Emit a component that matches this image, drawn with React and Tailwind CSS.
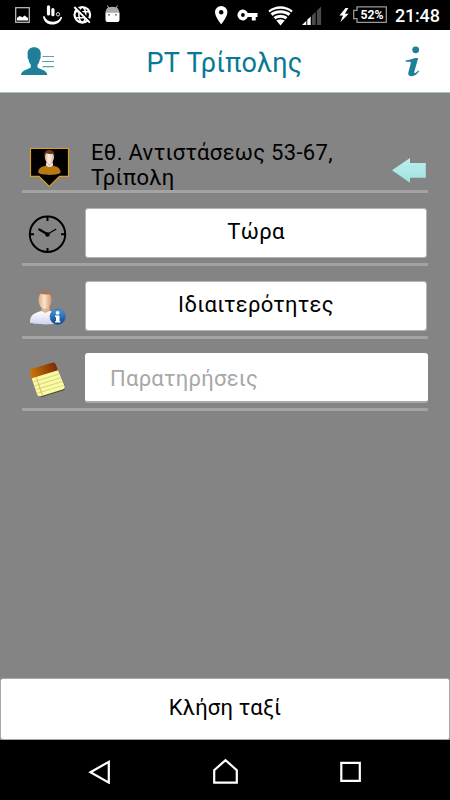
import { useState } from "react";
import clsx from "clsx";

const StatusBar = () => (
  <div className="h-[30px] bg-black flex items-center text-white">
    <svg width="130" height="30" viewBox="0 0 130 30">
      {/* picture */}
      <rect x="15.7" y="7.7" width="13.6" height="14.6" fill="none" stroke="#c4c4c4" strokeWidth="1.2" />
      <path d="M17 20.5v-2.5l2.5-2 3 1.2 2-1.6 3.5 2.4v2.5z" fill="#fff" />
      {/* touch */}
      <path d="M48.500 6.800v7.200M52.900 9.500v5.200" stroke="#fff" strokeWidth="3.200" strokeLinecap="round" />
      <circle cx="58" cy="14.300" r="1.700" fill="none" stroke="#ddd" strokeWidth="1" />
      <path d="M43 16.500l1.400-.4c1.400 3.800 4.200 5.600 8 5.600 4.200 0 7-1.800 8.400-5l1.400.5c-1.600 4.900-5 7.300-9.800 7.300-5 0-8.600-2.500-9.400-8z" fill="#fff" />
      {/* globe off */}
      <circle cx="82.300" cy="14.800" r="7.800" fill="none" stroke="#fff" strokeWidth="2.200" />
      <ellipse cx="82.300" cy="14.800" rx="3.400" ry="7.600" fill="none" stroke="#fff" strokeWidth="1.600" />
      <path d="M75 11.800h14.600M75 17.800h14.600" stroke="#fff" strokeWidth="1.600" />
      <path d="M75.500 6.200L91 21.500" stroke="#000" strokeWidth="2" />
      <path d="M74.300 7L89.800 22.700" stroke="#fff" strokeWidth="1.800" />
      {/* android */}
      <path d="M105.500 12.700c0-2.500 1.200-4.200 2.600-5.100l-1.300-1.800.7-.5 1.500 2c1.800-.7 5-.7 6.800 0l1.500-2 .7.500-1.300 1.800c1.400.9 2.600 2.600 2.600 5.100z" fill="#aaa" />
      <path d="M105.500 12.400h14v7a2.700 2.700 0 0 1-2.700 2.700h-8.600a2.700 2.700 0 0 1-2.700-2.700z" fill="#fff" />
      <circle cx="109" cy="14.800" r=".9" fill="#555" />
      <circle cx="116" cy="14.800" r=".9" fill="#555" />
    </svg>

    <svg width="176" height="30" viewBox="212 0 176 30" className="ml-[82px]">
      {/* location */}
      <path d="M221.200 6a6.200 6.200 0 0 0-6.200 6.200c0 4.600 6.200 12 6.200 12s6.200-7.400 6.200-12a6.200 6.200 0 0 0-6.200-6.200z" fill="#fff" />
      <circle cx="221.200" cy="12.200" r="2.200" fill="#000" />
      {/* key */}
      <path d="M247.800 13h9.700v4h-1.800v3.400h-3.900V17h-4a5.400 5.400 0 1 1 0-4z" fill="#fff" />
      <circle cx="242.900" cy="15" r="1.900" fill="#000" />
      {/* wifi */}
      <path d="M280.500 25.500L268.300 10.800c7-6 17.400-6 24.400 0z" fill="#fff" />
      <path d="M269.500 13.400c6-5.200 16-5.200 22 0M272.300 16.900c4.500-3.900 11.900-3.900 16.400 0M275.300 20.300c2.800-2.400 7.600-2.400 10.400 0" fill="none" stroke="#000" strokeWidth="1.300" />
      {/* signal */}
      <path d="M302 25l4.300-4.200V25zM307.300 19.800l3.400-3.300V25h-3.400z" fill="#fff" />
      <path d="M311.900 15.400l3.800-3.700V25h-3.800zM316.900 10.600l4.200-4.100V25h-4.200z" fill="#4a4a4a" />
      {/* charging */}
      <path d="M345.500 8l-6 7.600h3.500l-2.700 6.600 8.400-8.400h-3.800l3.500-5.800z" fill="#fff" />
      <path d="M357 6.800h29.300v15.500H357v-3.600h-3.300v-8.300h3.300z" fill="none" stroke="#999" strokeWidth="1.300" />
      <text x="372" y="19" textAnchor="middle" fontSize="13" fontWeight="700" textLength="23" lengthAdjust="spacingAndGlyphs" fill="#fff">52%</text>
    </svg>
    <span className="ml-[7px] mt-px text-[18px] font-medium leading-none tracking-[-0.2px]">21:48</span>
  </div>
);

const Header = () => (
  <div className="h-[63px] bg-white border-b border-[#a9c3ca] flex items-center justify-between pl-5 pr-7">
    <svg width="36" height="32" viewBox="20 45 36 32" fill="#1f7f98">
      <path d="M34.200 47.300c-4 0-6.700 2.400-6.700 6.500 0 .8.100 1.500.3 2.200-.6.900-.1 2.900.7 3.400.4 2.200 1.100 4 2.300 5.300v2.500c-1.200 1.900-9.800 2.500-9.800 7.900h26.300c0-5.400-8.600-6-9.800-7.900v-2.500c1.200-1.300 1.900-3.100 2.300-5.300.8-.5 1.300-2.500.7-3.400.2-.7.300-1.400.3-2.200 0-4.100-2.700-6.500-6.600-6.500z" />
      <path d="M42.500 56.500H54M42 61.500h12M42.500 66.600H54" stroke="#5ba0b3" strokeWidth="1.200" />
    </svg>
    <h1 className="mr-[11px] pt-[5px] text-[27px] leading-none text-[#067a94] tracking-[0.2px]">ΡΤ Τρίπολης</h1>
    <svg width="18" height="34" viewBox="404 44 18 34" fill="#1f7f98">
      <circle cx="415.700" cy="49.800" r="3.400" />
      <path d="M405.800 60.300c2.800-.4 6.400-1.100 9.200-2.300h3.200l-3.800 13.600c-.3 1.300.1 1.800.9 1.400 1.100-.5 2-1.400 2.900-2.600l.9.900c-2 3.200-4.800 4.900-7.500 4.900-2.800 0-3.800-1.500-3.200-4l2.400-9c.2-.9-.4-1.400-1.600-1.400h-3.400z" />
    </svg>
  </div>
);

const PassengerIcon = () => (
  <svg width="42" height="42" viewBox="29 146 42 42">
    <defs>
      <linearGradient id="skin" x1="0" x2="1">
        <stop offset="0" stopColor="#d9a98c" />
        <stop offset=".45" stopColor="#fff1e6" />
        <stop offset="1" stopColor="#dfb497" />
      </linearGradient>
    </defs>
    <path d="M30.500 148.500h38v27.800h-9l-10.200 10.200-10.200-10.200h-8.600z" fill="#000" stroke="#d8a01f" strokeWidth="1.200" />
    <path d="M46.500 160h6v7h-6z" fill="#e8c8b3" />
    <path d="M38.200 172.500c0-4.200 3.300-6 8-7l3.200 2 3.200-2c4.800 1 8 2.800 8 7-1.500 3.200-20.500 3.200-22.400 0z" fill="#b87a10" />
    <path d="M46.300 162.500l3.200 4.500 3.200-4.500.4 2.700-3.600 2.200-3.600-2.200z" fill="#eee" />
    <ellipse cx="49.400" cy="157" rx="4.600" ry="6.400" fill="url(#skin)" />
    <path d="M44.700 156.500c-1.200-4 .8-6.500 4.500-6.500s6 2.500 4.900 6.500l-.9-2.700c-2 .4-5.500-.1-7.300-.6z" fill="#70331d" />
  </svg>
);

const ClockIcon = () => (
  <svg width="42" height="42" viewBox="26 212 42 42">
    <circle cx="47.500" cy="234.300" r="17.700" fill="none" stroke="#000" strokeWidth="2" />
    <path d="M47.500 217v4M47.500 248v4M30 234.300h4M61 234.300h4" stroke="#000" strokeWidth="2" />
    <path d="M39.300 229.500l8.200 4.800" stroke="#000" strokeWidth="2.200" strokeLinecap="round" />
    <path d="M47.500 234.300l8.300-5" stroke="#000" strokeWidth="1.200" strokeLinecap="round" />
    <circle cx="47.500" cy="234.500" r="2.300" />
  </svg>
);

const DetailsIcon = () => (
  <svg width="42" height="42" viewBox="26 285 42 42">
    <defs>
      <linearGradient id="face" x1="0" x2="1">
        <stop offset="0" stopColor="#dba986" />
        <stop offset=".45" stopColor="#fde3cc" />
        <stop offset="1" stopColor="#c99873" />
      </linearGradient>
      <linearGradient id="shirt" x1="0" y1="0" x2="0" y2="1">
        <stop offset="0" stopColor="#fff" />
        <stop offset="1" stopColor="#cfd3ee" />
      </linearGradient>
      <linearGradient id="badge" x1="0" y1="0" x2="0" y2="1">
        <stop offset="0" stopColor="#4a9be0" />
        <stop offset="1" stopColor="#0a3f8e" />
      </linearGradient>
    </defs>
    <path d="M41.500 302h8v11h-8z" fill="#e0b390" />
    <path d="M30 322.500c0-6.500 2.500-9 11-11.500l4.300 2 4.500-2c8 2.200 10.500 5 10.500 11.500-4 2.500-25.500 2.500-30.300 0z" fill="url(#shirt)" />
    <ellipse cx="45" cy="299.800" rx="6.600" ry="9.200" fill="url(#face)" />
    <path d="M38.400 299c-1.600-5.600 1-9.300 6.700-9.300 5.900 0 8 3.700 6.500 9.300l-1.200-4.600c-3.200.4-8 0-10.600-.8z" fill="#a07a5c" />
    <circle cx="57.700" cy="316.800" r="7.700" fill="url(#badge)" stroke="#2f67ac" strokeWidth=".6" />
    <circle cx="57.600" cy="312.800" r="1.900" fill="#fff" />
    <path d="M55 315.600h4.500v5.600h1v1.400H55v-1.400h1v-4.200h-1z" fill="#fff" />
  </svg>
);

const NotesIcon = () => (
  <svg width="42" height="42" viewBox="27 357 42 42">
    <defs>
      <linearGradient id="cover" x1="0" x2="1">
        <stop offset="0" stopColor="#c97a05" />
        <stop offset="1" stopColor="#7c2808" />
      </linearGradient>
    </defs>
    <g transform="rotate(-17 47.500 379)">
      <path d="M35 366h24l4.500 25-2.500 4H37l-3-3z" fill="#4d4d42" />
      <path d="M33.500 373h27.300l2 17.500a3 3 0 0 1-3 3.200H37a3 3 0 0 1-3-3z" fill="#fbfb9b" />
      <path d="M34.500 378h26.500M34.500 382h27M34.500 386h27.500M34.500 390h28" stroke="#ccd799" strokeWidth="1" />
      <path d="M38.300 374l.4 19.500" stroke="#e8a070" strokeWidth=".8" />
      <path d="M36.500 365h21.100a3 3 0 0 1 3 2.700l.4 6.300H33l.5-6.300a3 3 0 0 1 3-2.700z" fill="url(#cover)" />
    </g>
  </svg>
);

const Row = ({ icon, children, className }) => (
  <div className={clsx("flex border-b-3 border-[#a3a3a3]", className)}>
    <div className="w-[63px] shrink-0 flex items-center pl-1">{icon}</div>
    {children}
  </div>
);

const buttonStyle =
  "flex-1 mr-px bg-white border border-[#b4b4b4] rounded-[3px] pb-[3px] text-[22px] leading-none tracking-[0.3px] text-black text-center";

export default function App() {
  const [notes, setNotes] = useState("");

  return (
    <div className="w-[450px] h-[800px] flex flex-col overflow-hidden bg-[#848484] font-[Roboto,sans-serif]">
      <StatusBar />
      <Header />

      {/* Order form */}
      <main className="flex-1 px-[22px] pt-[39px]">
        <div className="h-[61px] flex border-b-3 border-[#a3a3a3]">
          <div className="w-[69px] shrink-0 pl-[7px] pt-[14px]">
            <PassengerIcon />
          </div>
          <p className="flex-1 pt-2 text-[22px] leading-[25px] tracking-[0.3px] text-black">
            Εθ. Αντιστάσεως 53-67, Τρίπολη
          </p>
          <svg width="35" height="28" viewBox="391 156 35 28" className="mt-6 mr-0.5">
            <defs>
              <linearGradient id="arrow" x1="0" y1="0" x2="0" y2="1">
                <stop offset="0" stopColor="#bdeeed" />
                <stop offset="1" stopColor="#9fe3e1" />
              </linearGradient>
            </defs>
            <path d="M392 170.300l18-12.300v5h15.800v14.800H410v5z" fill="url(#arrow)" />
          </svg>
        </div>

        <Row icon={<ClockIcon />} className="h-[73px] pt-[15px] pb-[5px]">
          <button className={buttonStyle}>Τώρα</button>
        </Row>
        <Row icon={<DetailsIcon />} className="h-[73px] pt-[15px] pb-[5px]">
          <button className={buttonStyle}>Ιδιαιτερότητες</button>
        </Row>
        <Row icon={<NotesIcon />} className="h-[72px] pt-[14px] pb-[5px]">
          <input
            value={notes}
            onChange={(e) => setNotes(e.target.value)}
            placeholder="Παρατηρήσεις"
            className="flex-1 min-w-0 bg-white border-b-2 border-[#a8a8a8] rounded-[3px] pl-[25px] pt-0.5 text-[22px] tracking-[0.25px] placeholder:text-[#a8a8a8] outline-none"
          />
        </Row>
      </main>

      <button className="h-[62px] bg-white border border-[#a8a8a8] rounded-[3px] pb-[3px] text-[22px] leading-none tracking-[0.2px] text-black">
        Κλήση ταξί
      </button>

      {/* Navigation bar */}
      <nav className="h-[60px] bg-black flex items-center justify-between px-[86px]">
        <svg width="28" height="28" viewBox="86 756 28 28" fill="none" stroke="#fff" strokeWidth="2.2">
          <path d="M90.500 772.200l18.300-10.400v20.800z" />
        </svg>
        <svg width="28" height="28" viewBox="211 756 28 28" fill="none" stroke="#fff" strokeWidth="2.200">
          <path d="M214.200 782.600v-12.400l11.300-10 11.300 10v12.400z" />
        </svg>
        <svg width="28" height="28" viewBox="336 756 28 28" fill="none" stroke="#fff" strokeWidth="2.200">
          <path d="M341.300 762.800h18.500v18h-18.500z" />
        </svg>
      </nav>
    </div>
  );
}
